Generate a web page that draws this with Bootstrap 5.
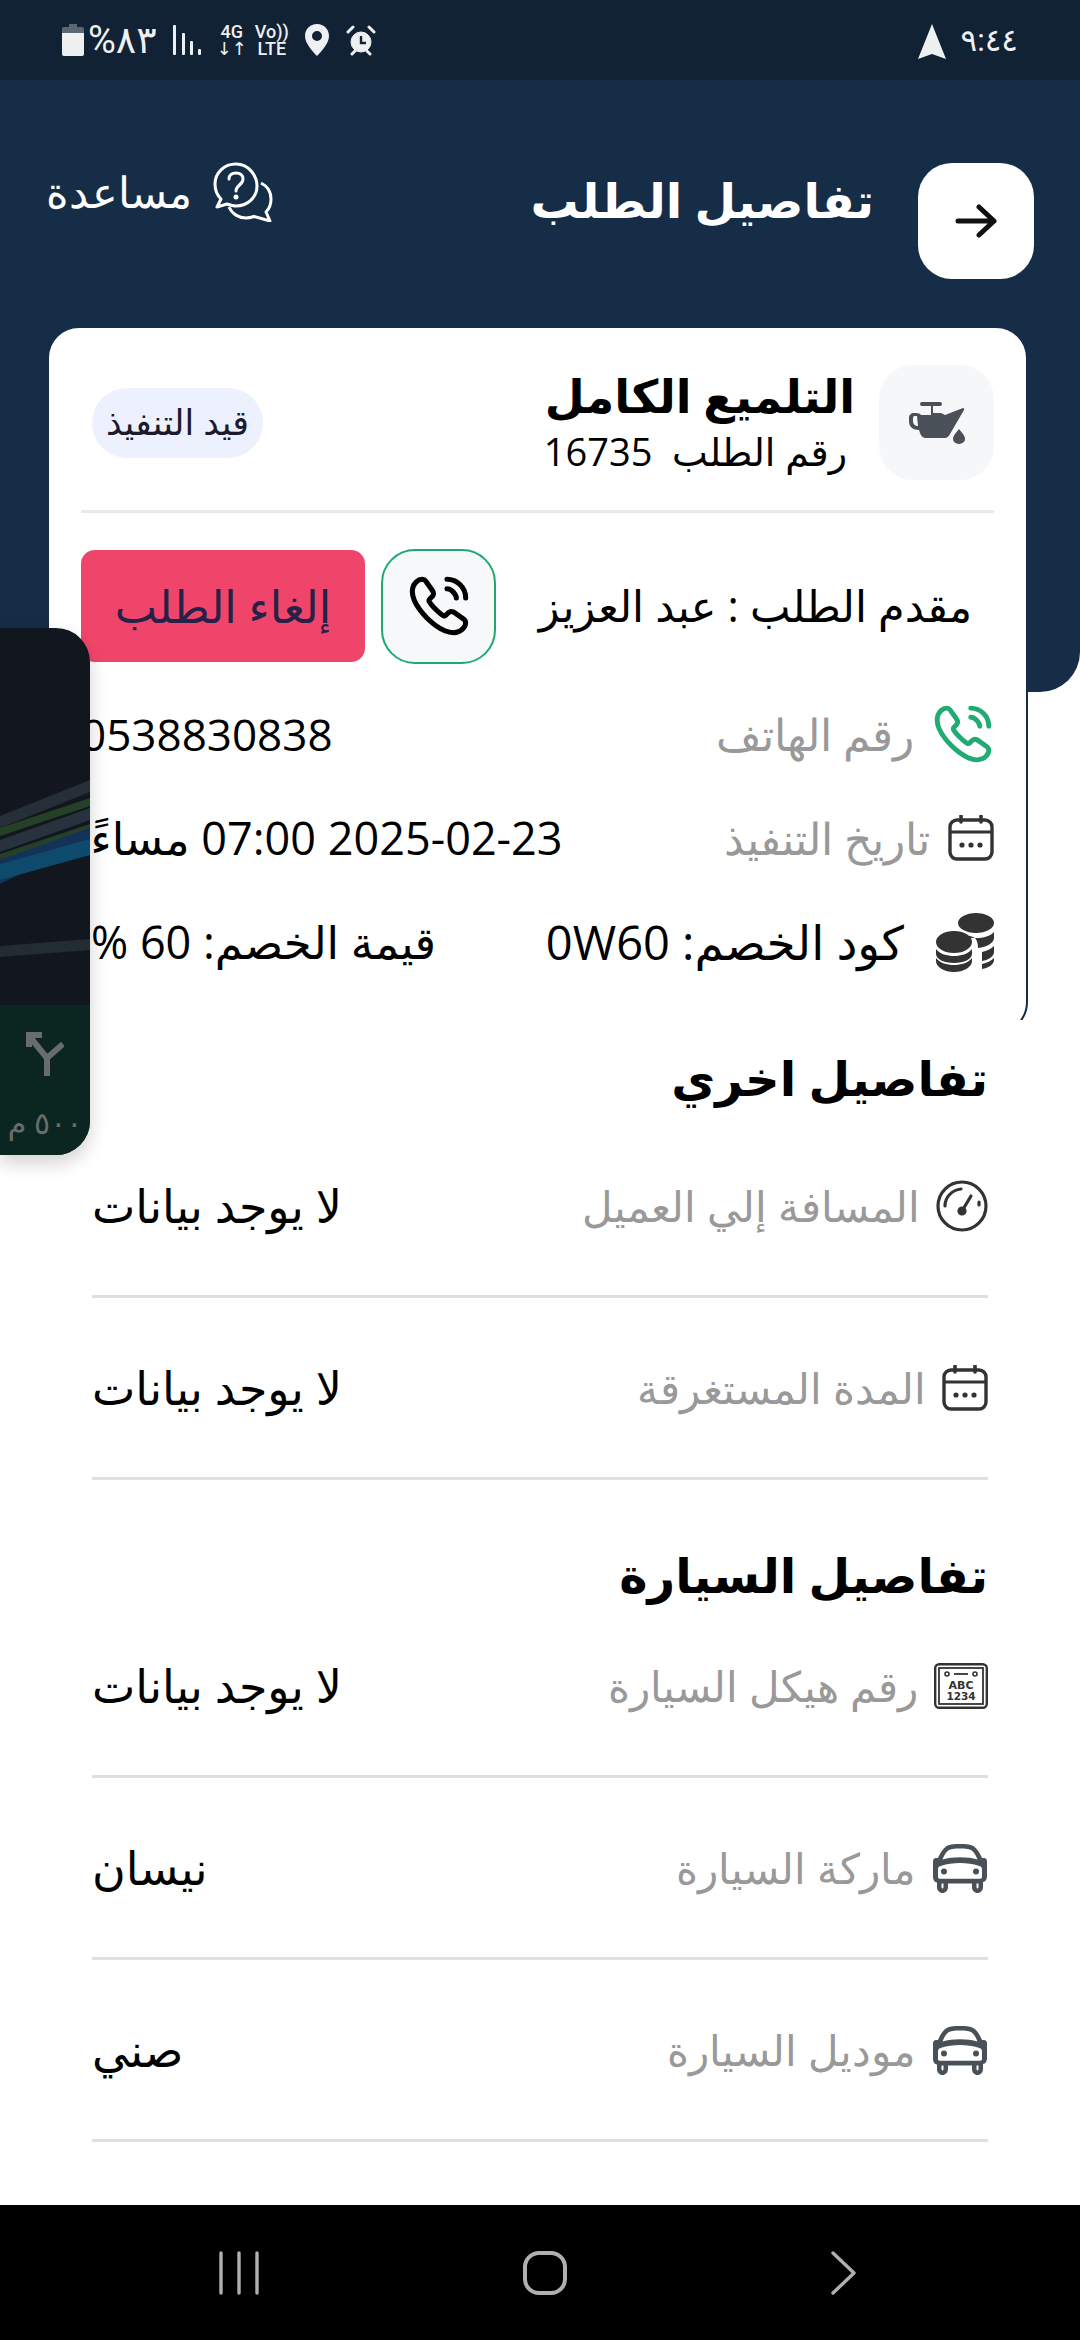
<!DOCTYPE html>
<html lang="ar" dir="rtl">
<head>
  <meta charset="UTF-8" />
  <meta name="viewport" content="width=device-width, initial-scale=1.0"/>
  <title>تفاصيل الطلب</title>
  <link href="https://cdn.jsdelivr.net/npm/bootstrap@5.3.3/dist/css/bootstrap.min.css" rel="stylesheet">
  <style>
    body {
      width: 1080px;
      height: 2340px;
      background: #fff;
      color: #000;
      font-family: "Open Sans", "Noto Sans", "DejaVu Sans", sans-serif;
      overflow: hidden;
      position: relative;
    }
    .status-strip {
      height: 80px;
      background: #112234;
      color: #eef0f2;
      padding: 0 62px;
      font-family: Roboto, "Noto Sans", "DejaVu Sans", sans-serif;
    }
    .status-time { font-size: 31px; line-height: 1; }
    .status-pct { font-size: 38px; line-height: 1; }
    .tiny-net { font-size: 18px; line-height: 17px; font-weight: 500; text-align: center; }
    .time-group { gap: 14px; }
    .pct-group { gap: 4px; }
    .net-group { gap: 8px; }
    .hero {
      height: 612px;
      background: #152d47;
      padding: 83px 46px 0 46px;
      border-radius: 0 0 40px 0;
    }
    .hero-left { gap: 44px; }
    .back-btn {
      width: 116px;
      height: 116px;
      background: #fff;
      border-radius: 34px;
      border: 0;
    }
    .hero-title { font-size: 48px; font-weight: 700; color: #fff; margin: -42px 0 0 0; }
    .help-link { color: #fff; font-size: 43px; font-weight: 300; margin-top: -3px; gap: 20px; }
    .order-card {
      margin: -366px 52px -14px 47px;
      height: 708px;
      background: #fff;
      border: 2px solid #152d47;
      border-radius: 32px;
      padding: 37px 32px 0 32px;
    }
    .icon-tile {
      width: 115px;
      height: 115px;
      background: #f6f7f9;
      border-radius: 34px;
      flex: none;
    }
    .order-name { font-size: 46px; font-weight: 700; line-height: 56px; }
    .order-no { font-size: 38px; line-height: 56px; padding-right: 8px; }
    .state-pill {
      background: #edf0fd;
      border-radius: 35px;
      height: 70px;
      width: 171px;
      font-size: 35px;
      color: #1b1b2b;
      margin-left: 11px;
      white-space: nowrap;
    }
    .card-rule { height: 3px; background: #e9e9e9; margin-top: 30px; }
    .requester-row { margin-top: 36px; height: 114px; }
    .requester-name { font-size: 43px; padding-right: 22px; white-space: nowrap; }
    .call-tile {
      width: 115px;
      height: 115px;
      background: #f6f8fa;
      border: 2px solid #1fa971;
      border-radius: 34px;
      flex: none;
    }
    .cancel-btn {
      width: 284px;
      height: 112px;
      background: #f0456a;
      color: #262149;
      font-size: 45px;
      border: 0;
      border-radius: 14px;
      flex: none;
      white-space: nowrap;
      padding: 0;
    }
    .info-row { height: 104px; }
    .info-row.first { margin-top: 19px; }
    .info-gap { gap: 18px; }
    .code-gap { gap: 32px; }
    .date-row { gap: 161px; }
    .info-label { font-size: 44px; color: #999; font-weight: 300; white-space: nowrap; }
    .info-val { font-size: 45px; white-space: nowrap; }
    .phone-val { font-size: 44px; }
    .code-row { padding-left: 10px; }
    .code-val { font-size: 47px; }
    .more-wrap { padding: 0 92px; background: #fff; }
    .sect-head { font-size: 48px; font-weight: 700; line-height: 54px; height: 96px; padding-top: 31px; }
    .sect-head.next { height: 116px; padding-top: 71px; line-height: 48px; }
    .spec-row { height: 182px; border-bottom: 3px solid #dfdfdf; }
    .spec-label { font-size: 42px; color: #999; font-weight: 300; white-space: nowrap; }
    .spec-val { font-size: 46px; white-space: nowrap; }
    .sys-nav {
      height: 135px;
      background: #000;
      margin-top: 63px;
      padding: 0 224px 0 219px;
    }
    .float-map {
      position: absolute;
      left: 0;
      top: 628px;
      width: 90px;
      height: 527px;
      background: #12171f;
      border-radius: 0 34px 34px 0;
      overflow: hidden;
      box-shadow: 0 8px 18px rgba(0,0,0,.18);
    }
    .float-foot {
      background: #0b2620;
      color: #686d6b;
      font-size: 30px;
      line-height: 40px;
      padding-top: 27px;
    }
    .float-dist { margin-top: 27px; white-space: nowrap; }
  </style>
</head>
<body>

  <svg width="0" height="0" class="d-block position-absolute">
    <symbol id="ico-call" viewBox="0 0 24 24">
      <path fill="none" stroke="currentColor" stroke-width="1.9" stroke-miterlimit="10" d="M21.97 18.33c0 .36-.08.73-.25 1.09-.17.36-.39.7-.68 1.02-.49.54-1.03.93-1.64 1.18-.6.25-1.25.38-1.95.38-1.02 0-2.11-.24-3.26-.73s-2.3-1.15-3.44-1.98a28.75 28.75 0 0 1-3.28-2.8 28.414 28.414 0 0 1-2.79-3.27c-.82-1.14-1.48-2.28-1.96-3.41C2.24 8.67 2 7.58 2 6.54c0-.68.12-1.33.36-1.93.24-.61.62-1.17 1.15-1.67C4.15 2.31 4.85 2 5.59 2c.28 0 .56.06.81.18.26.12.49.3.67.56l2.32 3.27c.18.25.31.48.4.7.09.21.14.42.14.61 0 .24-.07.48-.21.71-.13.23-.32.47-.56.71l-.76.79c-.11.11-.16.24-.16.4 0 .08.01.15.03.23.03.08.06.14.08.2.18.33.49.76.93 1.28.45.52.93 1.05 1.45 1.58.54.53 1.06 1.02 1.59 1.47.52.44.95.74 1.29.92.05.02.11.05.18.08.08.03.16.04.25.04.17 0 .3-.06.41-.17l.76-.75c.25-.25.49-.44.72-.56.23-.14.46-.21.71-.21.19 0 .39.04.61.13.22.09.45.22.7.39l3.31 2.35c.26.18.44.39.55.64.1.25.16.5.16.78Z"/>
      <path fill="none" stroke="currentColor" stroke-width="1.9" stroke-linecap="round" d="M18.5 9c0-.6-.47-1.52-1.17-2.27-.64-.69-1.49-1.23-2.33-1.23M22 9c0-3.87-3.13-7-7-7"/>
    </symbol>
    <symbol id="ico-cal" viewBox="0 0 46 46">
      <rect x="2" y="5" width="42" height="39" rx="7" fill="none" stroke="#333" stroke-width="3.4"/>
      <path d="M2 17h42" stroke="#333" stroke-width="3.2"/>
      <path d="M13 1v6M33 1v6" stroke="#333" stroke-width="3.6" stroke-linecap="round"/>
      <circle cx="14" cy="30" r="2.6" fill="#333"/><circle cx="23" cy="30" r="2.6" fill="#333"/><circle cx="32" cy="30" r="2.6" fill="#333"/>
    </symbol>
    <symbol id="ico-car" viewBox="0 0 56 50">
      <path fill="#4a5058" fill-rule="evenodd" d="M28 1c7 0 11 .6 14 2.400 3 2 6 6.600 8 11.600h2c2 0 3 1.500 3 3.500v15c0 3-1.500 5-4 5.600V44c0 3.500-2.500 6-5.500 6S40 47.500 40 44v-3.400H16V44c0 3.500-2.500 6-5.500 6S5 47.500 5 44v-4.400C2.500 39 1 37 1 34V18.500C1 16.500 2 15 4 15h2c2-5 5-9.600 8-11.600C17 1.600 21 1 28 1Zm0 4.500c-6 0-9.500.5-11.500 1.800-2 1.500-4.500 5-6 9.200 5-1.500 11-2.200 17.500-2.200s12.500.7 17.500 2.200c-1.500-4.200-4-7.700-6-9.200C37.500 6 34 5.500 28 5.500ZM28 20c-7 0-13 .8-18.600 2.800-2 .7-3.400 1.200-3.400 3.200v8c0 1 .6 1.700 1.700 1.700h40.600c1.100 0 1.700-.7 1.700-1.700v-8c0-2-1.400-2.500-3.400-3.200C41 20.800 35 20 28 20ZM9.500 40.600V44c0 .8.500 1.500 1 1.500s1-.7 1-1.500v-3.400Zm35 0V44c0 .8.500 1.500 1 1.500s1-.7 1-1.500v-3.400ZM12 25.500a3 3 0 1 1 0 6 3 3 0 0 1 0-6Zm32 0a3 3 0 1 1 0 6 3 3 0 0 1 0-6Z"/>
    </symbol>
  </svg>

  <div class="d-flex flex-column h-100">

    <!-- status bar -->
    <div class="status-strip d-flex align-items-center justify-content-between flex-shrink-0">
      <div class="time-group d-flex align-items-center">
        <span class="status-time">٩:٤٤</span>
        <svg width="30" height="36" viewBox="0 0 30 36" class="mt-1"><path fill="#eef0f2" d="M15 0 29 35 15 30 1 35Z"/></svg>
      </div>
      <div class="d-flex align-items-center gap-3">
        <svg width="32" height="32" viewBox="0 0 32 32" fill="none" stroke="#eef0f2"><circle cx="16" cy="18" r="10" fill="#eef0f2"/><path d="M16 12v7h5" stroke="#112234" stroke-width="2.400"/><path d="M3 8l5-5M29 8l-5-5M7 30l3-3M25 30l-3-3" stroke-width="3" stroke-linecap="round"/></svg>
        <svg width="24" height="32" viewBox="0 0 24 32"><path fill="#eef0f2" fill-rule="evenodd" d="M12 0C5 0 0 5 0 12c0 7 7 15 12 20 5-5 12-13 12-20C24 5 19 0 12 0Zm0 7a5 5 0 1 1 0 10 5 5 0 0 1 0-10Z"/></svg>
        <div class="net-group d-flex align-items-center">
          <div class="tiny-net" dir="ltr"><div>Vo))</div><div>LTE</div></div>
          <div class="tiny-net" dir="ltr"><div>4G</div><div>↓↑</div></div>
        </div>
        <svg width="28" height="30" viewBox="0 0 28 30" fill="#eef0f2"><rect x="0" y="0" width="3" height="30" rx="1"/><rect x="9" y="8" width="3" height="22" rx="1"/><rect x="17" y="16" width="3" height="14" rx="1"/><rect x="25" y="24" width="3" height="6" rx="1"/></svg>
        <div class="pct-group d-flex align-items-center">
          <span class="status-pct" dir="rtl">٨٣%</span>
          <svg width="22" height="32" viewBox="0 0 22 32"><path fill="#5a6775" d="M7 0h8v3h5a2 2 0 0 1 2 2v5H0V5a2 2 0 0 1 2-2h5Z"/><path fill="#eef0f2" d="M0 9h22v21a2 2 0 0 1-2 2H2a2 2 0 0 1-2-2Z"/></svg>
        </div>
      </div>
    </div>

    <!-- header -->
    <div class="hero d-flex align-items-start justify-content-between flex-shrink-0">
      <div class="hero-left d-flex align-items-center">
        <button class="back-btn d-flex align-items-center justify-content-center p-0" type="button">
          <svg width="42" height="34" viewBox="0 0 42 34" fill="none" stroke="#111" stroke-width="5" stroke-linecap="round" stroke-linejoin="round"><path d="M3 17h36M24 3l15 14-15 14"/></svg>
        </button>
        <h1 class="hero-title">تفاصيل الطلب</h1>
      </div>
      <div class="help-link d-flex align-items-center">
        <svg width="62" height="60" viewBox="0 0 62 60" fill="none" stroke="#fff" stroke-width="3" stroke-linejoin="round"><path d="M24 2C12 2 3 11 3 22c0 6 2 11 6 15l-4 8 10-3c3 1 6 2 9 2 12 0 21-9 21-20S36 2 24 2Z"/><path d="M17 45c3 7 10 11 17 11 3 0 5-.5 8-1.500L58 59l-4-9c3-3 5-8 5-13 0-7-4-13-10-16"/><path d="M17 17c0-4 3-6 7-6s7 2 7 6c0 6-7 6-7 12" stroke-linecap="round"/><circle cx="24" cy="35" r="1" fill="#fff"/></svg>
        <span>مساعدة</span>
      </div>
    </div>

    <!-- order card -->
    <div class="order-card flex-shrink-0">
      <div class="d-flex align-items-center justify-content-between">
        <div class="d-flex align-items-center gap-4">
          <div class="icon-tile d-flex align-items-center justify-content-center">
            <svg width="58" height="42" viewBox="0 0 58 42" fill="#4a5058"><path d="M14 0h18a2 2 0 0 1 0 4h-7v7h8l4 2 18-7c1 0 1.500 1 1 2L42 32c-1 2-3 4-5 4H18c-3 0-5-2-6-5l-1-3c-6 0-10-3-10-9v-3c0-3 2-5 5-5 3 0 5 0 6 1l1 1h10V4h-9a2 2 0 0 1 0-4ZM7 14c-1 0-2 .5-2 2v3c0 3 2 5 5 5l-1-10Z"/><path d="M51 27c4 5 6 7 6 10a6 5 0 0 1-12 0c0-3 2-5 6-10Z"/></svg>
          </div>
          <div>
            <div class="order-name">التلميع الكامل</div>
            <div class="order-no">رقم الطلب&nbsp; 16735</div>
          </div>
        </div>
        <div class="state-pill d-flex align-items-center justify-content-center">قيد التنفيذ</div>
      </div>
      <div class="card-rule"></div>

      <div class="requester-row d-flex align-items-center justify-content-between">
        <div class="requester-name">مقدم الطلب : عبد العزيز</div>
        <div class="d-flex align-items-center gap-3">
          <div class="call-tile d-flex align-items-center justify-content-center text-black">
            <svg width="64" height="64"><use href="#ico-call"/></svg>
          </div>
          <button class="cancel-btn" type="button">إلغاء الطلب</button>
        </div>
      </div>

      <div class="info-row first d-flex align-items-center justify-content-between">
        <div class="info-gap d-flex align-items-center">
          <svg width="62" height="62" style="color:#1fab72"><use href="#ico-call"/></svg>
          <span class="info-label">رقم الهاتف</span>
        </div>
        <span class="info-val phone-val" dir="ltr">0538830838</span>
      </div>
      <div class="info-row date-row d-flex align-items-center">
        <div class="info-gap d-flex align-items-center">
          <svg width="46" height="46"><use href="#ico-cal"/></svg>
          <span class="info-label">تاريخ التنفيذ</span>
        </div>
        <span class="info-val">2025-02-23 07:00 مساءً</span>
      </div>
      <div class="info-row code-row d-flex align-items-center justify-content-between">
        <div class="code-gap d-flex align-items-center">
          <svg width="58" height="60" viewBox="0 0 58 60" fill="#333"><ellipse cx="40" cy="11" rx="18" ry="10"/><path d="M22 23c5 3 11 3 18 3 8 0 14-2 18-6v6c0 5-7 9-16 10 0-4-1-8-3-10-5-3-12-3-17-3Zm24 17c5-1 9-3 12-6v6c0 4-5 8-12 9Zm0 12c5-1 9-3 12-6v2c0 4-5 8-12 9Z"/><ellipse cx="18" cy="30" rx="18" ry="11"/><path d="M0 37c4 5 11 7 18 7s14-2 18-7v5c0 5-8 9-18 9S0 47 0 42Zm0 9c4 5 11 7 18 7s14-2 18-7v3c0 6-8 11-18 11S0 55 0 49Z"/></svg>
          <span class="info-val code-val">كود الخصم: 0W60</span>
        </div>
        <span class="info-val">قيمة الخصم: 60 %</span>
      </div>
    </div>

    <!-- other details -->
    <div class="more-wrap position-relative flex-shrink-0">
      <div class="sect-head">تفاصيل اخري</div>
      <div class="spec-row d-flex align-items-center justify-content-between">
        <div class="d-flex align-items-center gap-3">
          <svg width="52" height="52" viewBox="0 0 52 52" fill="none" stroke="#333" stroke-width="3.200" stroke-linecap="round"><circle cx="26" cy="26" r="24"/><path d="M9 26c0-9 7-16 16-17M43 22v3M26 31l9-15"/><circle cx="26" cy="31" r="3" fill="#333"/></svg>
          <span class="spec-label">المسافة إلي العميل</span>
        </div>
        <span class="spec-val">لا يوجد بيانات</span>
      </div>
      <div class="spec-row d-flex align-items-center justify-content-between">
        <div class="d-flex align-items-center gap-3">
          <svg width="46" height="46"><use href="#ico-cal"/></svg>
          <span class="spec-label">المدة المستغرقة</span>
        </div>
        <span class="spec-val">لا يوجد بيانات</span>
      </div>

      <div class="sect-head next">تفاصيل السيارة</div>
      <div class="spec-row d-flex align-items-center justify-content-between">
        <div class="d-flex align-items-center gap-3">
          <svg width="54" height="46" viewBox="0 0 54 46" fill="none" stroke="#333"><rect x="1.200" y="1.200" width="51.600" height="43.600" rx="4" stroke-width="2.400"/><rect x="5" y="5" width="44" height="36" stroke-width="1.800"/><circle cx="13" cy="11" r="2" stroke-width="1.600"/><circle cx="41" cy="11" r="2" stroke-width="1.600"/><path d="M20 11h14" stroke-width="1.800"/><text x="27" y="26" text-anchor="middle" font-size="11" font-weight="700" fill="#333" stroke="none" font-family="'DejaVu Sans',sans-serif">ABC</text><text x="27" y="37" text-anchor="middle" font-size="10.500" font-weight="700" fill="#333" stroke="none" font-family="'DejaVu Sans',sans-serif">1234</text></svg>
          <span class="spec-label">رقم هيكل السيارة</span>
        </div>
        <span class="spec-val">لا يوجد بيانات</span>
      </div>
      <div class="spec-row d-flex align-items-center justify-content-between">
        <div class="d-flex align-items-center gap-3">
          <svg width="56" height="50"><use href="#ico-car"/></svg>
          <span class="spec-label">ماركة السيارة</span>
        </div>
        <span class="spec-val">نيسان</span>
      </div>
      <div class="spec-row d-flex align-items-center justify-content-between">
        <div class="d-flex align-items-center gap-3">
          <svg width="56" height="50"><use href="#ico-car"/></svg>
          <span class="spec-label">موديل السيارة</span>
        </div>
        <span class="spec-val">صني</span>
      </div>
    </div>

    <!-- system nav -->
    <div class="sys-nav d-flex align-items-center justify-content-between flex-shrink-0">
      <svg width="25" height="44" viewBox="0 0 25 44" fill="none" stroke="#b0b0b0" stroke-width="3.400" stroke-linecap="round" stroke-linejoin="round"><path d="M2 2l21 20L2 42"/></svg>
      <svg width="44" height="44" viewBox="0 0 44 44" fill="none" stroke="#b0b0b0" stroke-width="4"><rect x="2" y="2" width="40" height="40" rx="14"/></svg>
      <svg width="40" height="44" viewBox="0 0 40 44" fill="none" stroke="#b0b0b0" stroke-width="3.400" stroke-linecap="round"><path d="M2 2v40M20 2v40M38 2v40"/></svg>
    </div>
  </div>

  <!-- floating map window -->
  <div class="float-map d-flex flex-column">
    <svg width="90" height="377" viewBox="0 0 90 377" class="d-block flex-shrink-0">
      <path d="M0 188 90 152v12L0 200Z" fill="#262e37"/>
      <path d="M0 200 90 170v8L0 208Z" fill="#244026"/>
      <path d="M0 212 90 180v12L0 224Z" fill="#27323d"/>
      <path d="M0 226 90 196v6L0 232Z" fill="#25402a"/>
      <path d="M0 232 90 200v12L0 256Z" fill="#14315a"/>
      <path d="M0 236 90 211v16L0 252Z" fill="#0e4a6b"/>
      <path d="M0 318 90 311v11L0 329Z" fill="#232b33"/>
    </svg>
    <div class="float-foot text-center flex-grow-1">
      <svg width="38" height="44" viewBox="0 0 38 44" fill="none" stroke="#686d6b" stroke-width="6" class="d-block mx-auto"><path d="M21 44V26L4 5M37 12 21 26"/><path d="M3 15V3h13"/></svg>
      <div class="float-dist" dir="rtl">٥٠٠ م</div>
    </div>
  </div>

</body>
</html>
